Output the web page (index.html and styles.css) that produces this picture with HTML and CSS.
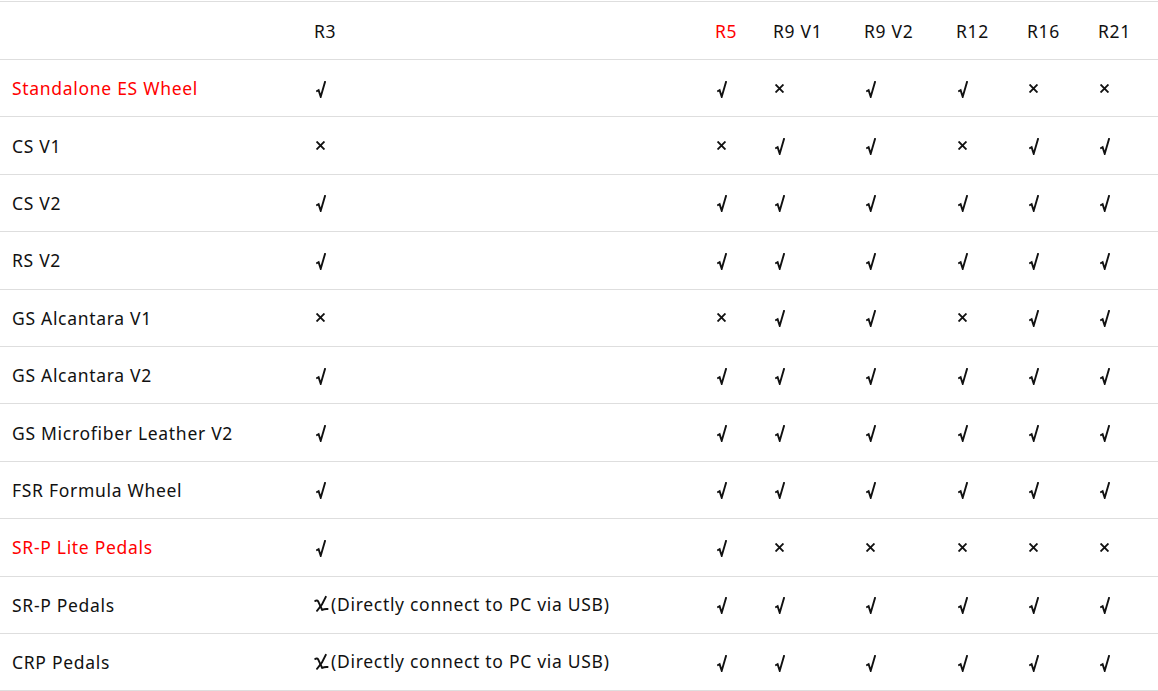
FILE: index.html
```html
<!DOCTYPE html>
<html>
<head>
<meta charset="utf-8">
<link rel="stylesheet" href="styles.css">
</head>
<body>
<table class="compat">
<colgroup>
<col class="c-name"><col class="c-r3"><col class="c-r5"><col class="c-r9v1"><col class="c-r9v2"><col class="c-r12"><col class="c-r16"><col class="c-r21">
</colgroup>
<thead>
<tr><th></th><th>R3</th><th class="red">R5</th><th>R9 V1</th><th>R9 V2</th><th>R12</th><th>R16</th><th>R21</th></tr>
</thead>
<tbody>
<tr><td class="red">Standalone ES Wheel</td><td><svg class="ck" viewBox="0 0 10 17" width="10" height="17"><path d="M1 10 L2.6 9.2 L4.7 15.8 L9 1"/></svg></td><td><svg class="ck" viewBox="0 0 10 17" width="10" height="17"><path d="M1 10 L2.6 9.2 L4.7 15.8 L9 1"/></svg></td><td><svg class="xx" viewBox="0 0 9 9" width="9" height="9"><path d="M1.2 1.2 L7.8 7.8 M7.8 1.2 L1.2 7.8"/></svg></td><td><svg class="ck" viewBox="0 0 10 17" width="10" height="17"><path d="M1 10 L2.6 9.2 L4.7 15.8 L9 1"/></svg></td><td><svg class="ck" viewBox="0 0 10 17" width="10" height="17"><path d="M1 10 L2.6 9.2 L4.7 15.8 L9 1"/></svg></td><td><svg class="xx" viewBox="0 0 9 9" width="9" height="9"><path d="M1.2 1.2 L7.8 7.8 M7.8 1.2 L1.2 7.8"/></svg></td><td><svg class="xx" viewBox="0 0 9 9" width="9" height="9"><path d="M1.2 1.2 L7.8 7.8 M7.8 1.2 L1.2 7.8"/></svg></td></tr>
<tr><td>CS V1</td><td><svg class="xx" viewBox="0 0 9 9" width="9" height="9"><path d="M1.2 1.2 L7.8 7.8 M7.8 1.2 L1.2 7.8"/></svg></td><td><svg class="xx" viewBox="0 0 9 9" width="9" height="9"><path d="M1.2 1.2 L7.8 7.8 M7.8 1.2 L1.2 7.8"/></svg></td><td><svg class="ck" viewBox="0 0 10 17" width="10" height="17"><path d="M1 10 L2.6 9.2 L4.7 15.8 L9 1"/></svg></td><td><svg class="ck" viewBox="0 0 10 17" width="10" height="17"><path d="M1 10 L2.6 9.2 L4.7 15.8 L9 1"/></svg></td><td><svg class="xx" viewBox="0 0 9 9" width="9" height="9"><path d="M1.2 1.2 L7.8 7.8 M7.8 1.2 L1.2 7.8"/></svg></td><td><svg class="ck" viewBox="0 0 10 17" width="10" height="17"><path d="M1 10 L2.6 9.2 L4.7 15.8 L9 1"/></svg></td><td><svg class="ck" viewBox="0 0 10 17" width="10" height="17"><path d="M1 10 L2.6 9.2 L4.7 15.8 L9 1"/></svg></td></tr>
<tr><td>CS V2</td><td><svg class="ck" viewBox="0 0 10 17" width="10" height="17"><path d="M1 10 L2.6 9.2 L4.7 15.8 L9 1"/></svg></td><td><svg class="ck" viewBox="0 0 10 17" width="10" height="17"><path d="M1 10 L2.6 9.2 L4.7 15.8 L9 1"/></svg></td><td><svg class="ck" viewBox="0 0 10 17" width="10" height="17"><path d="M1 10 L2.6 9.2 L4.7 15.8 L9 1"/></svg></td><td><svg class="ck" viewBox="0 0 10 17" width="10" height="17"><path d="M1 10 L2.6 9.2 L4.7 15.8 L9 1"/></svg></td><td><svg class="ck" viewBox="0 0 10 17" width="10" height="17"><path d="M1 10 L2.6 9.2 L4.7 15.8 L9 1"/></svg></td><td><svg class="ck" viewBox="0 0 10 17" width="10" height="17"><path d="M1 10 L2.6 9.2 L4.7 15.8 L9 1"/></svg></td><td><svg class="ck" viewBox="0 0 10 17" width="10" height="17"><path d="M1 10 L2.6 9.2 L4.7 15.8 L9 1"/></svg></td></tr>
<tr><td>RS V2</td><td><svg class="ck" viewBox="0 0 10 17" width="10" height="17"><path d="M1 10 L2.6 9.2 L4.7 15.8 L9 1"/></svg></td><td><svg class="ck" viewBox="0 0 10 17" width="10" height="17"><path d="M1 10 L2.6 9.2 L4.7 15.8 L9 1"/></svg></td><td><svg class="ck" viewBox="0 0 10 17" width="10" height="17"><path d="M1 10 L2.6 9.2 L4.7 15.8 L9 1"/></svg></td><td><svg class="ck" viewBox="0 0 10 17" width="10" height="17"><path d="M1 10 L2.6 9.2 L4.7 15.8 L9 1"/></svg></td><td><svg class="ck" viewBox="0 0 10 17" width="10" height="17"><path d="M1 10 L2.6 9.2 L4.7 15.8 L9 1"/></svg></td><td><svg class="ck" viewBox="0 0 10 17" width="10" height="17"><path d="M1 10 L2.6 9.2 L4.7 15.8 L9 1"/></svg></td><td><svg class="ck" viewBox="0 0 10 17" width="10" height="17"><path d="M1 10 L2.6 9.2 L4.7 15.8 L9 1"/></svg></td></tr>
<tr><td>GS Alcantara V1</td><td><svg class="xx" viewBox="0 0 9 9" width="9" height="9"><path d="M1.2 1.2 L7.8 7.8 M7.8 1.2 L1.2 7.8"/></svg></td><td><svg class="xx" viewBox="0 0 9 9" width="9" height="9"><path d="M1.2 1.2 L7.8 7.8 M7.8 1.2 L1.2 7.8"/></svg></td><td><svg class="ck" viewBox="0 0 10 17" width="10" height="17"><path d="M1 10 L2.6 9.2 L4.7 15.8 L9 1"/></svg></td><td><svg class="ck" viewBox="0 0 10 17" width="10" height="17"><path d="M1 10 L2.6 9.2 L4.7 15.8 L9 1"/></svg></td><td><svg class="xx" viewBox="0 0 9 9" width="9" height="9"><path d="M1.2 1.2 L7.8 7.8 M7.8 1.2 L1.2 7.8"/></svg></td><td><svg class="ck" viewBox="0 0 10 17" width="10" height="17"><path d="M1 10 L2.6 9.2 L4.7 15.8 L9 1"/></svg></td><td><svg class="ck" viewBox="0 0 10 17" width="10" height="17"><path d="M1 10 L2.6 9.2 L4.7 15.8 L9 1"/></svg></td></tr>
<tr><td>GS Alcantara V2</td><td><svg class="ck" viewBox="0 0 10 17" width="10" height="17"><path d="M1 10 L2.6 9.2 L4.7 15.8 L9 1"/></svg></td><td><svg class="ck" viewBox="0 0 10 17" width="10" height="17"><path d="M1 10 L2.6 9.2 L4.7 15.8 L9 1"/></svg></td><td><svg class="ck" viewBox="0 0 10 17" width="10" height="17"><path d="M1 10 L2.6 9.2 L4.7 15.8 L9 1"/></svg></td><td><svg class="ck" viewBox="0 0 10 17" width="10" height="17"><path d="M1 10 L2.6 9.2 L4.7 15.8 L9 1"/></svg></td><td><svg class="ck" viewBox="0 0 10 17" width="10" height="17"><path d="M1 10 L2.6 9.2 L4.7 15.8 L9 1"/></svg></td><td><svg class="ck" viewBox="0 0 10 17" width="10" height="17"><path d="M1 10 L2.6 9.2 L4.7 15.8 L9 1"/></svg></td><td><svg class="ck" viewBox="0 0 10 17" width="10" height="17"><path d="M1 10 L2.6 9.2 L4.7 15.8 L9 1"/></svg></td></tr>
<tr><td>GS Microfiber Leather V2</td><td><svg class="ck" viewBox="0 0 10 17" width="10" height="17"><path d="M1 10 L2.6 9.2 L4.7 15.8 L9 1"/></svg></td><td><svg class="ck" viewBox="0 0 10 17" width="10" height="17"><path d="M1 10 L2.6 9.2 L4.7 15.8 L9 1"/></svg></td><td><svg class="ck" viewBox="0 0 10 17" width="10" height="17"><path d="M1 10 L2.6 9.2 L4.7 15.8 L9 1"/></svg></td><td><svg class="ck" viewBox="0 0 10 17" width="10" height="17"><path d="M1 10 L2.6 9.2 L4.7 15.8 L9 1"/></svg></td><td><svg class="ck" viewBox="0 0 10 17" width="10" height="17"><path d="M1 10 L2.6 9.2 L4.7 15.8 L9 1"/></svg></td><td><svg class="ck" viewBox="0 0 10 17" width="10" height="17"><path d="M1 10 L2.6 9.2 L4.7 15.8 L9 1"/></svg></td><td><svg class="ck" viewBox="0 0 10 17" width="10" height="17"><path d="M1 10 L2.6 9.2 L4.7 15.8 L9 1"/></svg></td></tr>
<tr><td>FSR Formula Wheel</td><td><svg class="ck" viewBox="0 0 10 17" width="10" height="17"><path d="M1 10 L2.6 9.2 L4.7 15.8 L9 1"/></svg></td><td><svg class="ck" viewBox="0 0 10 17" width="10" height="17"><path d="M1 10 L2.6 9.2 L4.7 15.8 L9 1"/></svg></td><td><svg class="ck" viewBox="0 0 10 17" width="10" height="17"><path d="M1 10 L2.6 9.2 L4.7 15.8 L9 1"/></svg></td><td><svg class="ck" viewBox="0 0 10 17" width="10" height="17"><path d="M1 10 L2.6 9.2 L4.7 15.8 L9 1"/></svg></td><td><svg class="ck" viewBox="0 0 10 17" width="10" height="17"><path d="M1 10 L2.6 9.2 L4.7 15.8 L9 1"/></svg></td><td><svg class="ck" viewBox="0 0 10 17" width="10" height="17"><path d="M1 10 L2.6 9.2 L4.7 15.8 L9 1"/></svg></td><td><svg class="ck" viewBox="0 0 10 17" width="10" height="17"><path d="M1 10 L2.6 9.2 L4.7 15.8 L9 1"/></svg></td></tr>
<tr><td class="red">SR-P Lite Pedals</td><td><svg class="ck" viewBox="0 0 10 17" width="10" height="17"><path d="M1 10 L2.6 9.2 L4.7 15.8 L9 1"/></svg></td><td><svg class="ck" viewBox="0 0 10 17" width="10" height="17"><path d="M1 10 L2.6 9.2 L4.7 15.8 L9 1"/></svg></td><td><svg class="xx" viewBox="0 0 9 9" width="9" height="9"><path d="M1.2 1.2 L7.8 7.8 M7.8 1.2 L1.2 7.8"/></svg></td><td><svg class="xx" viewBox="0 0 9 9" width="9" height="9"><path d="M1.2 1.2 L7.8 7.8 M7.8 1.2 L1.2 7.8"/></svg></td><td><svg class="xx" viewBox="0 0 9 9" width="9" height="9"><path d="M1.2 1.2 L7.8 7.8 M7.8 1.2 L1.2 7.8"/></svg></td><td><svg class="xx" viewBox="0 0 9 9" width="9" height="9"><path d="M1.2 1.2 L7.8 7.8 M7.8 1.2 L1.2 7.8"/></svg></td><td><svg class="xx" viewBox="0 0 9 9" width="9" height="9"><path d="M1.2 1.2 L7.8 7.8 M7.8 1.2 L1.2 7.8"/></svg></td></tr>
<tr><td>SR-P Pedals</td><td><span class="partial"><svg class="px" viewBox="0 0 15 17" width="15" height="17"><path d="M1.2 6c1.2-1 2.4-0.6 3.2 0.8L8.2 15c1.4-0.9 3.2-1.2 5.4-1"/><path d="M11.8 1.8C9.6 7.4 6.6 11.8 3 15.8"/></svg>(Directly connect to PC via USB)</span></td><td><svg class="ck" viewBox="0 0 10 17" width="10" height="17"><path d="M1 10 L2.6 9.2 L4.7 15.8 L9 1"/></svg></td><td><svg class="ck" viewBox="0 0 10 17" width="10" height="17"><path d="M1 10 L2.6 9.2 L4.7 15.8 L9 1"/></svg></td><td><svg class="ck" viewBox="0 0 10 17" width="10" height="17"><path d="M1 10 L2.6 9.2 L4.7 15.8 L9 1"/></svg></td><td><svg class="ck" viewBox="0 0 10 17" width="10" height="17"><path d="M1 10 L2.6 9.2 L4.7 15.8 L9 1"/></svg></td><td><svg class="ck" viewBox="0 0 10 17" width="10" height="17"><path d="M1 10 L2.6 9.2 L4.7 15.8 L9 1"/></svg></td><td><svg class="ck" viewBox="0 0 10 17" width="10" height="17"><path d="M1 10 L2.6 9.2 L4.7 15.8 L9 1"/></svg></td></tr>
<tr><td>CRP Pedals</td><td><span class="partial"><svg class="px" viewBox="0 0 15 17" width="15" height="17"><path d="M1.2 6c1.2-1 2.4-0.6 3.2 0.8L8.2 15c1.4-0.9 3.2-1.2 5.4-1"/><path d="M11.8 1.8C9.6 7.4 6.6 11.8 3 15.8"/></svg>(Directly connect to PC via USB)</span></td><td><svg class="ck" viewBox="0 0 10 17" width="10" height="17"><path d="M1 10 L2.6 9.2 L4.7 15.8 L9 1"/></svg></td><td><svg class="ck" viewBox="0 0 10 17" width="10" height="17"><path d="M1 10 L2.6 9.2 L4.7 15.8 L9 1"/></svg></td><td><svg class="ck" viewBox="0 0 10 17" width="10" height="17"><path d="M1 10 L2.6 9.2 L4.7 15.8 L9 1"/></svg></td><td><svg class="ck" viewBox="0 0 10 17" width="10" height="17"><path d="M1 10 L2.6 9.2 L4.7 15.8 L9 1"/></svg></td><td><svg class="ck" viewBox="0 0 10 17" width="10" height="17"><path d="M1 10 L2.6 9.2 L4.7 15.8 L9 1"/></svg></td><td><svg class="ck" viewBox="0 0 10 17" width="10" height="17"><path d="M1 10 L2.6 9.2 L4.7 15.8 L9 1"/></svg></td></tr>
</tbody>
</table>
</body>
</html>
```

FILE: styles.css
```css
html, body {
  margin: 0;
  padding: 0;
  background: #fff;
}
body {
  font-family: "Noto Sans", "Noto Sans CJK SC", sans-serif;
  font-size: 17.5px;
  letter-spacing: 0.7px;
  color: #111;
}
.compat {
  width: 1158px;
  table-layout: fixed;
  border-collapse: collapse;
  margin-top: 1px;
}
.c-name { width: 302px; }
.c-r3 { width: 401px; }
.c-r5 { width: 58px; }
.c-r9v1 { width: 91px; }
.c-r9v2 { width: 92px; }
.c-r12 { width: 71px; }
.c-r16 { width: 71px; }
.c-r21 { width: 72px; }
.compat th,
.compat td {
  height: 56.4px;
  padding: 0 0 0 12px;
  text-align: left;
  font-weight: normal;
  border-top: 1.5px solid #dedede;
  border-bottom: 1.5px solid #dedede;
  vertical-align: middle;
  white-space: nowrap;
}
.compat thead th {
  height: 57px;
}
.compat .red { color: #ff0000; }
.ck,
.xx {
  display: block;
  fill: none;
  stroke: #111;
  stroke-linecap: square;
  stroke-linejoin: miter;
}
.ck {
  stroke-width: 1.9;
  margin-left: 2px;
  margin-top: 2px;
}
.xx {
  stroke-width: 1.9;
  margin-left: 2px;
}
.partial {
  display: inline-flex;
  align-items: center;
}
.px {
  fill: none;
  stroke: #111;
  stroke-width: 1.9;
  stroke-linecap: round;
  stroke-linejoin: round;
  margin-left: 0;
  margin-right: 2px;
}
```
